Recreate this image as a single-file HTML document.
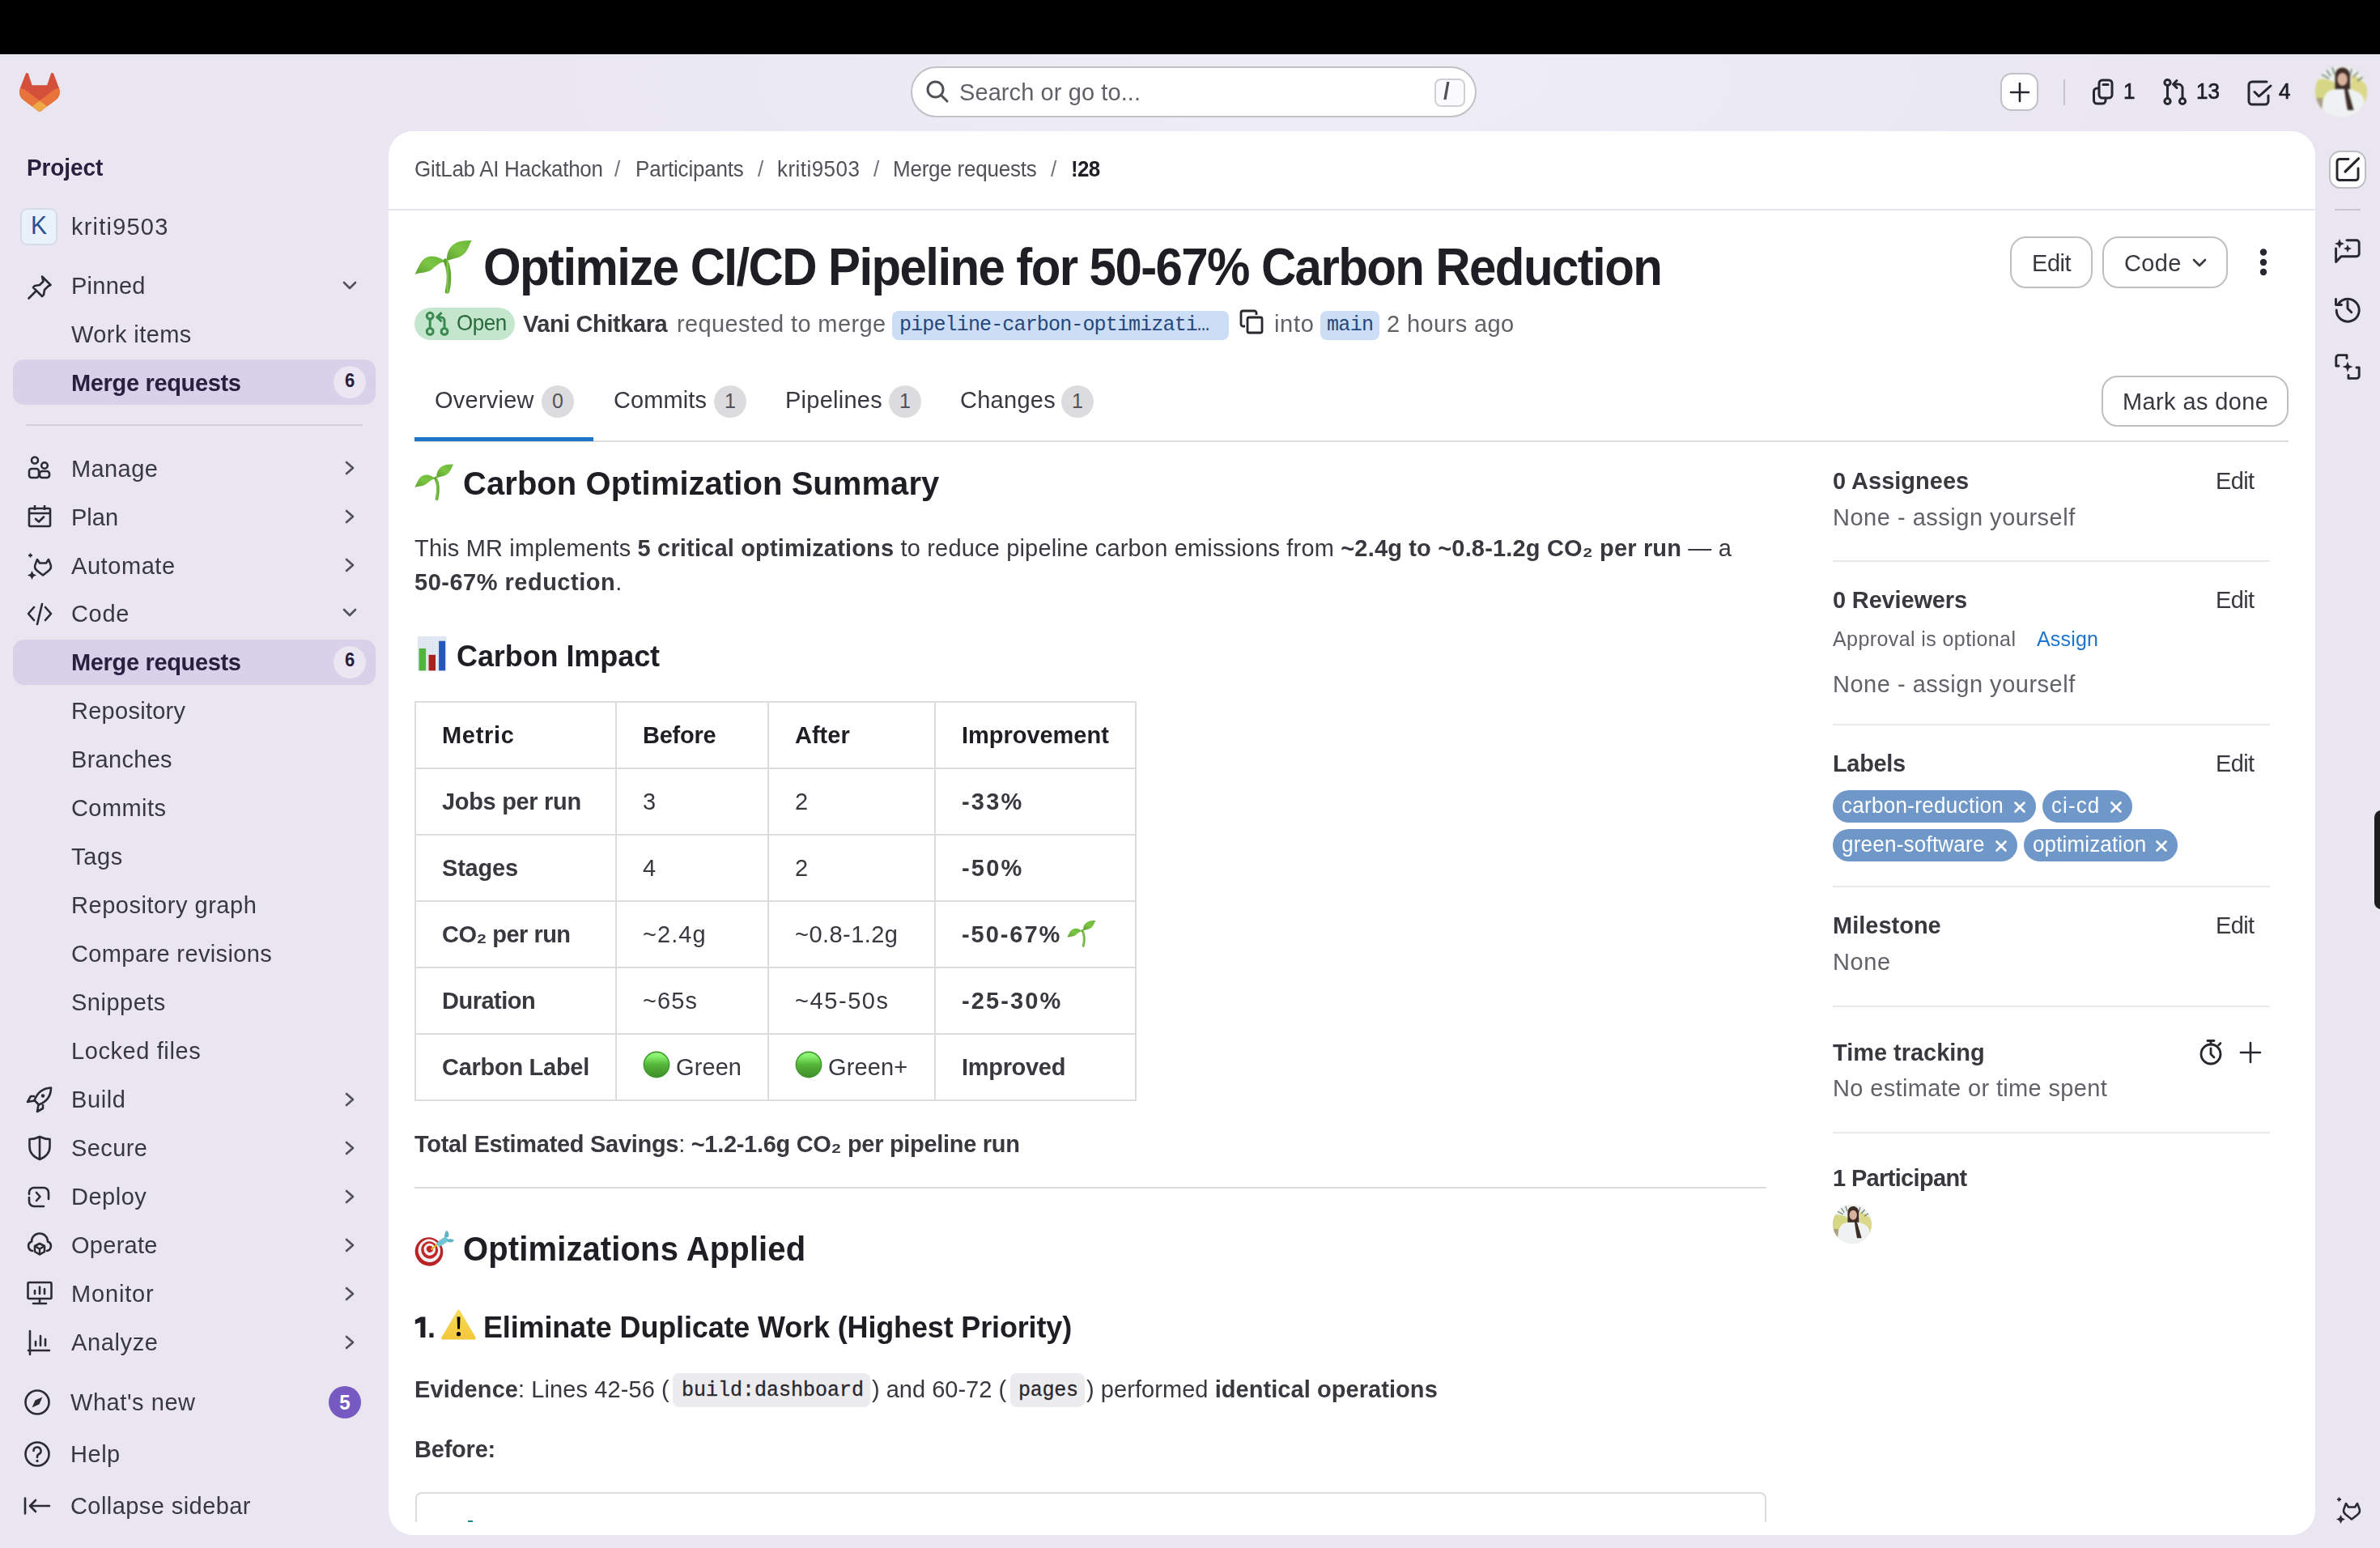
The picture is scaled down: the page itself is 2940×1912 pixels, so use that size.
<!DOCTYPE html><html><head><meta charset="utf-8"><title>Optimize CI/CD Pipeline</title><style>*{margin:0;padding:0}
html,body{width:2940px;height:1912px;overflow:hidden}
body{background:radial-gradient(ellipse 1150px 330px at 1650px 100px, #efedf6 0%, rgba(239,237,246,0.55) 45%, rgba(239,237,246,0) 100%), #e9e6f1;position:relative;font-family:'Liberation Sans',sans-serif}
.t{position:absolute;white-space:nowrap}
.t b{font-weight:700}
.r{position:absolute;display:block;overflow:visible}
</style></head><body>
<div class="r" style="left:0px;top:0px;width:2940px;height:67px;background:#000"></div>
<svg class="r" style="left:24px;top:90px;" width="50" height="48" viewBox="0 0 25 24"><path d="m24.507 9.5-.034-.09L21.082.562a.896.896 0 0 0-1.694.091l-2.29 7.01H7.825L5.535.653a.898.898 0 0 0-1.694-.09L.451 9.411.416 9.5a6.297 6.297 0 0 0 2.09 7.278l.012.01.03.022 5.16 3.867 2.560 1.935 1.554 1.176a1.051 1.051 0 0 0 1.268 0l1.555-1.176 2.56-1.935 5.197-3.89.014-.01A6.297 6.297 0 0 0 24.507 9.5Z" fill="#d4503a"/>
<path d="m24.507 9.5-.034-.09a11.44 11.44 0 0 0-4.56 2.051l-7.447 5.632 4.742 3.584 5.197-3.89.014-.01A6.297 6.297 0 0 0 24.507 9.5Z" fill="#e8743b"/>
<path d="m7.707 20.677 2.56 1.935 1.555 1.176a1.051 1.051 0 0 0 1.268 0l1.555-1.176 2.56-1.935-4.743-3.584-4.755 3.584Z" fill="#eea846"/>
<path d="M5.01 11.461a11.43 11.43 0 0 0-4.56-2.05L.416 9.5a6.297 6.297 0 0 0 2.09 7.278l.012.01.03.022 5.16 3.867 4.745-3.584-7.444-5.632Z" fill="#e8743b"/></svg>
<div class="r" style="left:1125px;top:82px;width:699px;height:63px;background:#fff;border:2px solid #c2c1c7;border-radius:32px;box-sizing:border-box"></div>
<svg class="r" style="left:1143px;top:98px;" width="30" height="30" viewBox="0 0 30 30"><circle cx="12.5" cy="12.5" r="9.5" fill="none" stroke="#535158" stroke-width="3"/><path d="M19.5 19.5 27 27" stroke="#535158" stroke-width="3" stroke-linecap="round"/></svg>
<div class="t" style="left:1185px;top:96.5px;font-size:29px;line-height:35px;font-weight:400;color:#626168;letter-spacing:0.09px;font-family:'Liberation Sans', sans-serif;transform:scaleY(1.04);transform-origin:0 27.5px;">Search or go to...</div>
<div class="r" style="left:1772px;top:97px;width:38px;height:35px;background:#fbfbfd;border:2px solid #cfcfd4;border-radius:8px;box-sizing:border-box"></div>
<div class="t" style="left:1783px;top:97.3px;font-size:28px;line-height:34px;font-weight:700;color:#535158;letter-spacing:0.00px;font-family:'Liberation Sans', sans-serif;transform:scaleY(1.045);transform-origin:0 26.7px;">/</div>
<div class="r" style="left:2471px;top:90px;width:47px;height:47px;background:#fff;border:2px solid #c2c1c7;border-radius:14px;box-sizing:border-box"></div>
<svg class="r" style="left:2483px;top:102px;" width="24" height="24" viewBox="0 0 24 24"><path d="M12 1v22M1 12h22" stroke="#28272d" stroke-width="2.6" stroke-linecap="round"/></svg>
<div class="r" style="left:2549px;top:98px;width:2px;height:32px;background:#c4c3c9"></div>
<svg class="r" style="left:2584px;top:97px;" width="28" height="34" viewBox="0 0 28 34"><rect x="9" y="2" width="16" height="22" rx="4" fill="none" stroke="#28272d" stroke-width="3"/><path d="M14 7.5h6" stroke="#28272d" stroke-width="3" stroke-linecap="round"/><path d="M9 12H6.5A4 4 0 0 0 2.5 16v11a4 4 0 0 0 4 4H13a4 4 0 0 0 4-4v-3" fill="none" stroke="#28272d" stroke-width="3"/></svg>
<div class="t" style="left:2623px;top:97.5px;font-size:26px;line-height:31px;font-weight:400;color:#1f1e24;letter-spacing:0.00px;font-family:'Liberation Sans', sans-serif;transform:scaleY(1.04);transform-origin:0 24.5px;-webkit-text-stroke:0.7px #1f1e24">1</div>
<svg class="r" style="left:2672px;top:97px;" width="32" height="34" viewBox="0 0 32 34"><circle cx="5.5" cy="5" r="3.6" fill="none" stroke="#28272d" stroke-width="3"/><circle cx="5.5" cy="28" r="3.6" fill="none" stroke="#28272d" stroke-width="3"/><circle cx="24" cy="28" r="3.6" fill="none" stroke="#28272d" stroke-width="3"/><path d="M5.5 8.6v15.8" stroke="#28272d" stroke-width="3"/><path d="M24 24.4V12a5 5 0 0 0-5-5h-5" fill="none" stroke="#28272d" stroke-width="3"/><path d="M17 2.5 12.5 7l4.5 4.5" fill="none" stroke="#28272d" stroke-width="3" stroke-linejoin="round" stroke-linecap="round"/></svg>
<div class="t" style="left:2713px;top:97.5px;font-size:26px;line-height:31px;font-weight:400;color:#1f1e24;letter-spacing:0.00px;font-family:'Liberation Sans', sans-serif;transform:scaleY(1.04);transform-origin:0 24.5px;-webkit-text-stroke:0.7px #1f1e24">13</div>
<svg class="r" style="left:2774px;top:98px;" width="34" height="34" viewBox="0 0 34 34"><path d="M26 3H8a4 4 0 0 0-4 4v20a4 4 0 0 0 4 4h16a4 4 0 0 0 4-4v-7" fill="none" stroke="#28272d" stroke-width="3" stroke-linecap="round"/><path d="M11 15.5l5.5 5.5L31 8" fill="none" stroke="#28272d" stroke-width="3" stroke-linecap="round" stroke-linejoin="round"/></svg>
<div class="t" style="left:2815px;top:97.5px;font-size:26px;line-height:31px;font-weight:400;color:#1f1e24;letter-spacing:0.00px;font-family:'Liberation Sans', sans-serif;transform:scaleY(1.04);transform-origin:0 24.5px;-webkit-text-stroke:0.7px #1f1e24">4</div>
<svg class="r" style="left:2860px;top:81px;filter:blur(0.9px)" width="64" height="64" viewBox="0 0 64 64"><defs><clipPath id="cpa1"><circle cx="32" cy="32" r="32"/></clipPath></defs>
<g clip-path="url(#cpa1)"><rect width="64" height="64" fill="#dcdcb0"/>
<path d="M0 0h64v22H0z" fill="#edf0ec"/>
<path d="M0 18c8-3 17-1 24 3v22H0z" fill="#d6d685"/>
<path d="M44 12c10 1 18 9 20 17v24H47z" fill="#dcd88a"/>
<path d="M8 11l9 5M13 4l6 9M21 2l3 9M45 4l-2 8M53 8l-6 6M59 14l-7 5" stroke="#6f7f78" stroke-width="1.6"/>
<rect x="0" y="40" width="9" height="15" fill="#a99f84"/>
<path d="M24.5 14c0-8 4-11.5 9-11.5s9.5 3.5 9.5 11.5v20h-18.5z" fill="#3e2d27"/>
<ellipse cx="33.6" cy="17" rx="6.2" ry="8" fill="#d9b29e"/>
<path d="M8 64c0-13 1-27 8-32 5-3 10-3 13-3h9c9 0 18 3 22 12 1 6 1 14-1 23z" fill="#eff2f2"/>
<path d="M38.5 24c3 10 6 20 9 31h-7.5c-2-10-3.5-20-4.5-31z" fill="#3e2d27"/></g></svg>
<div class="t" style="left:33px;top:191.3px;font-size:28px;line-height:34px;font-weight:700;color:#28203f;letter-spacing:-0.12px;font-family:'Liberation Sans', sans-serif;transform:scaleY(1.045);transform-origin:0 26.7px;">Project</div>
<div class="r" style="left:25px;top:257px;width:46px;height:46px;background:#e9f1fb;border:2px solid #d4dcea;border-radius:9px;box-sizing:border-box"></div>
<div class="t" style="left:48px;top:260.6px;font-size:30px;line-height:36px;font-weight:400;color:#2b4f8e;letter-spacing:0.00px;font-family:'Liberation Sans', sans-serif;transform:translateX(-50%) scaleY(1.04);transform-origin:0 28.4px;">K</div>
<div class="t" style="left:88px;top:262.5px;font-size:29px;line-height:35px;font-weight:400;color:#3a383f;letter-spacing:1.21px;font-family:'Liberation Sans', sans-serif;transform:scaleY(1.04);transform-origin:0 27.5px;">kriti9503</div>
<svg class="r" style="left:33px;top:339px;" width="32" height="34" viewBox="0 0 32 34"><path d="M19 2.5l10.5 10.5-3 1.5-4.5 4.5-1 6-2 2-11-11 2-2 6-1 4.5-4.5z" fill="none" stroke="#2c2b31" stroke-width="2.6" stroke-linejoin="round"/><path d="M11 21L2.5 29.5" stroke="#2c2b31" stroke-width="2.6" stroke-linecap="round"/></svg>
<div class="t" style="left:88px;top:335.5px;font-size:29px;line-height:35px;font-weight:400;color:#3a383f;letter-spacing:0.24px;font-family:'Liberation Sans', sans-serif;transform:scaleY(1.04);transform-origin:0 27.5px;">Pinned</div>
<svg class="r" style="left:423px;top:346px;" width="18" height="14" viewBox="0 0 18 14"><path d="M2 3l7 7 7-7" fill="none" stroke="#535158" stroke-width="2.6" stroke-linecap="round" stroke-linejoin="round"/></svg>
<div class="t" style="left:88px;top:395.5px;font-size:29px;line-height:35px;font-weight:400;color:#3a383f;letter-spacing:0.43px;font-family:'Liberation Sans', sans-serif;transform:scaleY(1.04);transform-origin:0 27.5px;">Work items</div>
<div class="r" style="left:16px;top:444px;width:448px;height:56px;background:#d9d0e9;border-radius:14px"></div>
<div class="t" style="left:88px;top:455.5px;font-size:29px;line-height:35px;font-weight:700;color:#28203f;letter-spacing:-0.34px;font-family:'Liberation Sans', sans-serif;transform:scaleY(1.045);transform-origin:0 27.5px;">Merge requests</div>
<div class="r" style="left:412px;top:452.0px;width:40px;height:40.0px;background:#ebe7f2;border-radius:20px"></div>
<div class="t" style="left:432px;top:458.4px;font-size:22px;line-height:26px;font-weight:700;color:#28203f;letter-spacing:0.00px;font-family:'Liberation Sans', sans-serif;transform:translateX(-50%) scaleY(1.045);transform-origin:0 20.6px;">6</div>
<div class="r" style="left:32px;top:524px;width:416px;height:2px;background:#d3d0dc"></div>
<svg class="r" style="left:33px;top:562px;" width="32" height="34" viewBox="0 0 32 34"><circle cx="10" cy="6.5" r="4" fill="none" stroke="#2c2b31" stroke-width="2.6"/><rect x="3" y="17" width="12" height="11" rx="3" fill="none" stroke="#2c2b31" stroke-width="2.6"/><circle cx="22" cy="13" r="3.8" fill="none" stroke="#2c2b31" stroke-width="2.6"/><rect x="16" y="20" width="12" height="8" rx="3" fill="none" stroke="#2c2b31" stroke-width="2.6"/></svg>
<div class="t" style="left:88px;top:561.5px;font-size:29px;line-height:35px;font-weight:400;color:#3a383f;letter-spacing:0.40px;font-family:'Liberation Sans', sans-serif;transform:scaleY(1.04);transform-origin:0 27.5px;">Manage</div>
<svg class="r" style="left:424px;top:569px;" width="16" height="18" viewBox="0 0 16 18"><path d="M4 2l8 7-8 7" fill="none" stroke="#535158" stroke-width="2.6" stroke-linecap="round" stroke-linejoin="round"/></svg>
<svg class="r" style="left:33px;top:622px;" width="32" height="34" viewBox="0 0 32 34"><rect x="3" y="6" width="26" height="22" rx="1.5" fill="none" stroke="#2c2b31" stroke-width="2.6"/><path d="M3 12h26M10 2v6M22 2v6" stroke="#2c2b31" stroke-width="2.6"/><path d="M11 19l4 3.5 6-6" fill="none" stroke="#2c2b31" stroke-width="2.6" stroke-linecap="round" stroke-linejoin="round"/></svg>
<div class="t" style="left:88px;top:621.5px;font-size:29px;line-height:35px;font-weight:400;color:#3a383f;letter-spacing:0.00px;font-family:'Liberation Sans', sans-serif;transform:scaleY(1.04);transform-origin:0 27.5px;">Plan</div>
<svg class="r" style="left:424px;top:629px;" width="16" height="18" viewBox="0 0 16 18"><path d="M4 2l8 7-8 7" fill="none" stroke="#535158" stroke-width="2.6" stroke-linecap="round" stroke-linejoin="round"/></svg>
<svg class="r" style="left:33px;top:682px;" width="32" height="34" viewBox="0 0 32 34"><path d="M13 9l-2.5 6.5C9 19 10.5 21 13 23l7 5.5 7-5.5c2.5-2 4-4 2.5-7.5L27 9l-3 4.5h-8z" fill="none" stroke="#2c2b31" stroke-width="2.6" stroke-linejoin="round"/><path d="M4.5 1.5v5M2 4h5" stroke="#2c2b31" stroke-width="2"/><path d="M6.5 23l1.8 3.7 3.7 1.8-3.7 1.8L6.5 34 4.7 30.3 1 28.5l3.7-1.8z" fill="#2c2b31"/></svg>
<div class="t" style="left:88px;top:681.5px;font-size:29px;line-height:35px;font-weight:400;color:#3a383f;letter-spacing:0.57px;font-family:'Liberation Sans', sans-serif;transform:scaleY(1.04);transform-origin:0 27.5px;">Automate</div>
<svg class="r" style="left:424px;top:689px;" width="16" height="18" viewBox="0 0 16 18"><path d="M4 2l8 7-8 7" fill="none" stroke="#535158" stroke-width="2.6" stroke-linecap="round" stroke-linejoin="round"/></svg>
<svg class="r" style="left:33px;top:741.5px;" width="32" height="34" viewBox="0 0 32 34"><path d="M9 8L2 16l7 8M23 8l7 8-7 8M19 4l-6 25" fill="none" stroke="#2c2b31" stroke-width="2.6" stroke-linecap="round" stroke-linejoin="round"/></svg>
<div class="t" style="left:88px;top:741.0px;font-size:29px;line-height:35px;font-weight:400;color:#3a383f;letter-spacing:0.67px;font-family:'Liberation Sans', sans-serif;transform:scaleY(1.04);transform-origin:0 27.5px;">Code</div>
<svg class="r" style="left:423px;top:749.5px;" width="18" height="14" viewBox="0 0 18 14"><path d="M2 3l7 7 7-7" fill="none" stroke="#535158" stroke-width="2.6" stroke-linecap="round" stroke-linejoin="round"/></svg>
<div class="r" style="left:16px;top:790px;width:448px;height:56px;background:#d9d0e9;border-radius:14px"></div>
<div class="t" style="left:88px;top:800.5px;font-size:29px;line-height:35px;font-weight:700;color:#28203f;letter-spacing:-0.34px;font-family:'Liberation Sans', sans-serif;transform:scaleY(1.045);transform-origin:0 27.5px;">Merge requests</div>
<div class="r" style="left:412px;top:798.0px;width:40px;height:40.0px;background:#ebe7f2;border-radius:20px"></div>
<div class="t" style="left:432px;top:803.4px;font-size:22px;line-height:26px;font-weight:700;color:#28203f;letter-spacing:0.00px;font-family:'Liberation Sans', sans-serif;transform:translateX(-50%) scaleY(1.045);transform-origin:0 20.6px;">6</div>
<div class="t" style="left:88px;top:861.0px;font-size:29px;line-height:35px;font-weight:400;color:#3a383f;letter-spacing:0.27px;font-family:'Liberation Sans', sans-serif;transform:scaleY(1.04);transform-origin:0 27.5px;">Repository</div>
<div class="t" style="left:88px;top:921.0px;font-size:29px;line-height:35px;font-weight:400;color:#3a383f;letter-spacing:0.29px;font-family:'Liberation Sans', sans-serif;transform:scaleY(1.04);transform-origin:0 27.5px;">Branches</div>
<div class="t" style="left:88px;top:981.0px;font-size:29px;line-height:35px;font-weight:400;color:#3a383f;letter-spacing:0.43px;font-family:'Liberation Sans', sans-serif;transform:scaleY(1.04);transform-origin:0 27.5px;">Commits</div>
<div class="t" style="left:88px;top:1041.0px;font-size:29px;line-height:35px;font-weight:400;color:#3a383f;letter-spacing:0.67px;font-family:'Liberation Sans', sans-serif;transform:scaleY(1.04);transform-origin:0 27.5px;">Tags</div>
<div class="t" style="left:88px;top:1101.0px;font-size:29px;line-height:35px;font-weight:400;color:#3a383f;letter-spacing:0.53px;font-family:'Liberation Sans', sans-serif;transform:scaleY(1.04);transform-origin:0 27.5px;">Repository graph</div>
<div class="t" style="left:88px;top:1161.0px;font-size:29px;line-height:35px;font-weight:400;color:#3a383f;letter-spacing:0.38px;font-family:'Liberation Sans', sans-serif;transform:scaleY(1.04);transform-origin:0 27.5px;">Compare revisions</div>
<div class="t" style="left:88px;top:1221.0px;font-size:29px;line-height:35px;font-weight:400;color:#3a383f;letter-spacing:0.50px;font-family:'Liberation Sans', sans-serif;transform:scaleY(1.04);transform-origin:0 27.5px;">Snippets</div>
<div class="t" style="left:88px;top:1281.0px;font-size:29px;line-height:35px;font-weight:400;color:#3a383f;letter-spacing:0.59px;font-family:'Liberation Sans', sans-serif;transform:scaleY(1.04);transform-origin:0 27.5px;">Locked files</div>
<svg class="r" style="left:33px;top:1341.5px;" width="32" height="34" viewBox="0 0 32 34"><path d="M30 1.5C20 2 13 8 9.5 17l5.5 5.5C24 19 30 12 30 1.5z" fill="none" stroke="#2c2b31" stroke-width="2.6" stroke-linejoin="round"/><circle cx="20" cy="11.5" r="2.2" fill="#2c2b31"/><path d="M10 12H5L1 19l8.5-1.5M20 22v5l-7 4 1.5-8.5" fill="none" stroke="#2c2b31" stroke-width="2.6" stroke-linejoin="round"/></svg>
<div class="t" style="left:88px;top:1341.0px;font-size:29px;line-height:35px;font-weight:400;color:#3a383f;letter-spacing:0.62px;font-family:'Liberation Sans', sans-serif;transform:scaleY(1.04);transform-origin:0 27.5px;">Build</div>
<svg class="r" style="left:424px;top:1348.5px;" width="16" height="18" viewBox="0 0 16 18"><path d="M4 2l8 7-8 7" fill="none" stroke="#535158" stroke-width="2.6" stroke-linecap="round" stroke-linejoin="round"/></svg>
<svg class="r" style="left:33px;top:1401.5px;" width="32" height="34" viewBox="0 0 32 34"><path d="M16 2C12 4 8 5 3.5 5v9c0 7.5 5 13 12.5 16 7.5-3 12.5-8.5 12.5-16V5C24 5 20 4 16 2z" fill="none" stroke="#2c2b31" stroke-width="2.6" stroke-linejoin="round"/><path d="M16 3v26" stroke="#2c2b31" stroke-width="2.6"/></svg>
<div class="t" style="left:88px;top:1401.0px;font-size:29px;line-height:35px;font-weight:400;color:#3a383f;letter-spacing:0.40px;font-family:'Liberation Sans', sans-serif;transform:scaleY(1.04);transform-origin:0 27.5px;">Secure</div>
<svg class="r" style="left:424px;top:1408.5px;" width="16" height="18" viewBox="0 0 16 18"><path d="M4 2l8 7-8 7" fill="none" stroke="#535158" stroke-width="2.6" stroke-linecap="round" stroke-linejoin="round"/></svg>
<svg class="r" style="left:33px;top:1461.5px;" width="32" height="34" viewBox="0 0 32 34"><path d="M3 13v-2a6 6 0 0 1 6-6h12a6 6 0 0 1 6 6v8" fill="none" stroke="#2c2b31" stroke-width="2.6" stroke-linecap="round"/><path d="M3 17v5a6 6 0 0 0 6 6h12" fill="none" stroke="#2c2b31" stroke-width="2.6" stroke-linecap="round"/><path d="M12 11l4.5 5-4.5 5" fill="none" stroke="#2c2b31" stroke-width="2.6" stroke-linecap="round" stroke-linejoin="round"/></svg>
<div class="t" style="left:88px;top:1461.0px;font-size:29px;line-height:35px;font-weight:400;color:#3a383f;letter-spacing:0.52px;font-family:'Liberation Sans', sans-serif;transform:scaleY(1.04);transform-origin:0 27.5px;">Deploy</div>
<svg class="r" style="left:424px;top:1468.5px;" width="16" height="18" viewBox="0 0 16 18"><path d="M4 2l8 7-8 7" fill="none" stroke="#535158" stroke-width="2.6" stroke-linecap="round" stroke-linejoin="round"/></svg>
<svg class="r" style="left:33px;top:1521.5px;" width="32" height="34" viewBox="0 0 32 34"><path d="M7 23a6 6 0 0 1-1-11.5A10 10 0 0 1 26 11.5 6 6 0 0 1 25 23" fill="none" stroke="#2c2b31" stroke-width="2.6" stroke-linecap="round"/><path d="M16 14l-6 3v7l6 3.5 6-3.5v-7z" fill="none" stroke="#2c2b31" stroke-width="2.6" stroke-linejoin="round"/><path d="M10 17l6 3.5 6-3.5M16 20.5v7" fill="none" stroke="#2c2b31" stroke-width="2.4"/></svg>
<div class="t" style="left:88px;top:1521.0px;font-size:29px;line-height:35px;font-weight:400;color:#3a383f;letter-spacing:0.28px;font-family:'Liberation Sans', sans-serif;transform:scaleY(1.04);transform-origin:0 27.5px;">Operate</div>
<svg class="r" style="left:424px;top:1528.5px;" width="16" height="18" viewBox="0 0 16 18"><path d="M4 2l8 7-8 7" fill="none" stroke="#535158" stroke-width="2.6" stroke-linecap="round" stroke-linejoin="round"/></svg>
<svg class="r" style="left:33px;top:1581.5px;" width="32" height="34" viewBox="0 0 32 34"><rect x="1.5" y="2" width="29" height="20" rx="1.5" fill="none" stroke="#2c2b31" stroke-width="2.6"/><path d="M10 16v-4M16 16V7.5M22 16v-6M16 22v6M8 28h16" stroke="#2c2b31" stroke-width="2.6" stroke-linecap="round"/></svg>
<div class="t" style="left:88px;top:1581.0px;font-size:29px;line-height:35px;font-weight:400;color:#3a383f;letter-spacing:0.83px;font-family:'Liberation Sans', sans-serif;transform:scaleY(1.04);transform-origin:0 27.5px;">Monitor</div>
<svg class="r" style="left:424px;top:1588.5px;" width="16" height="18" viewBox="0 0 16 18"><path d="M4 2l8 7-8 7" fill="none" stroke="#535158" stroke-width="2.6" stroke-linecap="round" stroke-linejoin="round"/></svg>
<svg class="r" style="left:33px;top:1641.5px;" width="32" height="34" viewBox="0 0 32 34"><path d="M4 2v29M2 26h26" stroke="#2c2b31" stroke-width="2.6" stroke-linecap="round"/><path d="M11 20v-5M17 20V8M23 20v-8" stroke="#2c2b31" stroke-width="2.6" stroke-linecap="round"/></svg>
<div class="t" style="left:88px;top:1641.0px;font-size:29px;line-height:35px;font-weight:400;color:#3a383f;letter-spacing:0.62px;font-family:'Liberation Sans', sans-serif;transform:scaleY(1.04);transform-origin:0 27.5px;">Analyze</div>
<svg class="r" style="left:424px;top:1648.5px;" width="16" height="18" viewBox="0 0 16 18"><path d="M4 2l8 7-8 7" fill="none" stroke="#535158" stroke-width="2.6" stroke-linecap="round" stroke-linejoin="round"/></svg>
<svg class="r" style="left:29px;top:1715px;" width="34" height="34" viewBox="0 0 34 34"><circle cx="17" cy="17" r="14.5" fill="none" stroke="#2c2b31" stroke-width="2.6"/><path d="M23.5 10.5l-4 9-9 4 4-9z" fill="#2c2b31"/></svg>
<div class="t" style="left:87px;top:1715.0px;font-size:29px;line-height:35px;font-weight:400;color:#3a383f;letter-spacing:0.56px;font-family:'Liberation Sans', sans-serif;transform:scaleY(1.04);transform-origin:0 27.5px;">What's new</div>
<div class="r" style="left:406px;top:1712px;width:40px;height:40px;background:#7759c2;border-radius:20px"></div>
<div class="t" style="left:426px;top:1718.2px;font-size:24px;line-height:29px;font-weight:700;color:#fff;letter-spacing:0.00px;font-family:'Liberation Sans', sans-serif;transform:translateX(-50%) scaleY(1.045);transform-origin:0 22.8px;">5</div>
<svg class="r" style="left:29px;top:1779px;" width="34" height="34" viewBox="0 0 34 34"><circle cx="17" cy="17" r="14.5" fill="none" stroke="#2c2b31" stroke-width="2.6"/><path d="M12.5 13a4.5 4.5 0 1 1 6.5 4c-1.5.8-2 1.7-2 3v1" fill="none" stroke="#2c2b31" stroke-width="2.6" stroke-linecap="round"/><circle cx="17" cy="25.5" r="1.7" fill="#2c2b31"/></svg>
<div class="t" style="left:87px;top:1779.0px;font-size:29px;line-height:35px;font-weight:400;color:#3a383f;letter-spacing:0.53px;font-family:'Liberation Sans', sans-serif;transform:scaleY(1.04);transform-origin:0 27.5px;">Help</div>
<svg class="r" style="left:29px;top:1849px;" width="34" height="22" viewBox="0 0 34 22"><path d="M2 1.5v19M32 11H8M15 4l-7 7 7 7" fill="none" stroke="#2c2b31" stroke-width="2.6" stroke-linecap="round" stroke-linejoin="round"/></svg>
<div class="t" style="left:87px;top:1843.1px;font-size:29px;line-height:35px;font-weight:400;color:#3a383f;letter-spacing:0.43px;font-family:'Liberation Sans', sans-serif;transform:scaleY(1.04);transform-origin:0 27.5px;">Collapse sidebar</div>
<div class="r" style="left:480px;top:162px;width:2380px;height:1734px;background:#fff;border-radius:30px"></div>
<div class="t" style="left:512px;top:194.1px;font-size:26px;line-height:31px;font-weight:400;color:#535158;letter-spacing:-0.31px;font-family:'Liberation Sans', sans-serif;transform:scaleY(1.04);transform-origin:0 24.5px;">GitLab AI Hackathon</div>
<div class="t" style="left:759px;top:194.1px;font-size:26px;line-height:31px;font-weight:400;color:#737278;letter-spacing:0.00px;font-family:'Liberation Sans', sans-serif;transform:scaleY(1.04);transform-origin:0 24.5px;">/</div>
<div class="t" style="left:785px;top:194.1px;font-size:26px;line-height:31px;font-weight:400;color:#535158;letter-spacing:-0.18px;font-family:'Liberation Sans', sans-serif;transform:scaleY(1.04);transform-origin:0 24.5px;">Participants</div>
<div class="t" style="left:936px;top:194.1px;font-size:26px;line-height:31px;font-weight:400;color:#737278;letter-spacing:0.00px;font-family:'Liberation Sans', sans-serif;transform:scaleY(1.04);transform-origin:0 24.5px;">/</div>
<div class="t" style="left:960px;top:194.1px;font-size:26px;line-height:31px;font-weight:400;color:#535158;letter-spacing:0.45px;font-family:'Liberation Sans', sans-serif;transform:scaleY(1.04);transform-origin:0 24.5px;">kriti9503</div>
<div class="t" style="left:1079px;top:194.1px;font-size:26px;line-height:31px;font-weight:400;color:#737278;letter-spacing:0.00px;font-family:'Liberation Sans', sans-serif;transform:scaleY(1.04);transform-origin:0 24.5px;">/</div>
<div class="t" style="left:1103px;top:194.1px;font-size:26px;line-height:31px;font-weight:400;color:#535158;letter-spacing:-0.23px;font-family:'Liberation Sans', sans-serif;transform:scaleY(1.04);transform-origin:0 24.5px;">Merge requests</div>
<div class="t" style="left:1298px;top:194.1px;font-size:26px;line-height:31px;font-weight:400;color:#737278;letter-spacing:0.00px;font-family:'Liberation Sans', sans-serif;transform:scaleY(1.04);transform-origin:0 24.5px;">/</div>
<div class="t" style="left:1323px;top:194.1px;font-size:26px;line-height:31px;font-weight:700;color:#1f1e24;letter-spacing:-0.70px;font-family:'Liberation Sans', sans-serif;transform:scaleY(1.045);transform-origin:0 24.5px;">!28</div>
<div class="r" style="left:480px;top:258px;width:2380px;height:2px;background:#e6e4ec"></div>
<svg class="r" style="left:512px;top:295px;" width="72" height="66" viewBox="0 0 72 64"><defs><linearGradient id="lg1" x1="0" y1="1" x2="1" y2="0"><stop offset="0" stop-color="#5d9f30"/><stop offset=".5" stop-color="#7cc544"/><stop offset="1" stop-color="#6ab53a"/></linearGradient>
<linearGradient id="lg2" x1="0" y1="0" x2="1" y2="0"><stop offset="0" stop-color="#5c9d2f"/><stop offset=".6" stop-color="#86cf4a"/><stop offset="1" stop-color="#64a835"/></linearGradient></defs>
<path d="M38.8 27.6C30 20 16 16 8 28 4 35 2 40 .5 43c6-3 15-1 22-7 6-5 10-8.5 16.3-8.4z" fill="url(#lg1)"/>
<path d="M40.2 26.2C39 14 46 3 60 1.5c5-.5 9-.5 11.2-.5-3 2-3 9-9.2 16-7 7-16 6-21.8 9.2z" fill="url(#lg1)"/>
<path d="M38.5 26c4.5 10 5.5 22 2 38" fill="none" stroke="url(#lg2)" stroke-width="5.5" stroke-linecap="round"/></svg>
<div class="t" style="left:597px;top:295.7px;font-size:60px;line-height:72px;font-weight:700;color:#1f1e24;letter-spacing:-1.60px;font-family:'Liberation Sans', sans-serif;transform:scaleY(1.09);transform-origin:0 56.8px;">Optimize CI/CD Pipeline for 50-67% Carbon Reduction</div>
<div class="r" style="left:2483px;top:292px;width:102px;height:64px;background:#fff;border:2px solid #bfbfc3;border-radius:20px;box-sizing:border-box"></div>
<div class="t" style="left:2510px;top:307.5px;font-size:29px;line-height:35px;font-weight:400;color:#3a383f;letter-spacing:-0.43px;font-family:'Liberation Sans', sans-serif;transform:scaleY(1.04);transform-origin:0 27.5px;">Edit</div>
<div class="r" style="left:2597px;top:292px;width:155px;height:64px;background:#fff;border:2px solid #bfbfc3;border-radius:20px;box-sizing:border-box"></div>
<div class="t" style="left:2624px;top:307.5px;font-size:29px;line-height:35px;font-weight:400;color:#3a383f;letter-spacing:0.33px;font-family:'Liberation Sans', sans-serif;transform:scaleY(1.04);transform-origin:0 27.5px;">Code</div>
<svg class="r" style="left:2708px;top:319px;" width="18" height="12" viewBox="0 0 18 12"><path d="M2 2l7 7 7-7" fill="none" stroke="#3a383f" stroke-width="2.6" stroke-linecap="round" stroke-linejoin="round"/></svg>
<svg class="r" style="left:2788px;top:303px;" width="16" height="40" viewBox="0 0 16 40"><circle cx="8" cy="8.5" r="4.2" fill="#28272d"/><circle cx="8" cy="21" r="4.2" fill="#28272d"/><circle cx="8" cy="33" r="4.2" fill="#28272d"/></svg>
<div class="r" style="left:512px;top:380px;width:124px;height:40px;background:#c3e6cd;border-radius:20px"></div>
<svg class="r" style="left:526px;top:385px;" width="30" height="30" viewBox="0 0 30 30"><circle cx="5.2" cy="5.2" r="3.9" fill="none" stroke="#3a8a4e" stroke-width="3"/><circle cx="5.2" cy="24.4" r="3.9" fill="none" stroke="#3a8a4e" stroke-width="3"/><circle cx="23" cy="24.4" r="3.9" fill="none" stroke="#3a8a4e" stroke-width="3"/><path d="M5.2 9v11.5M23 20.5V11a4 4 0 0 0-4-4h-4.5" fill="none" stroke="#3a8a4e" stroke-width="3"/><path d="M18.5 2.2 14 6.8l4.5 4.4" fill="none" stroke="#3a8a4e" stroke-width="3" stroke-linecap="square" stroke-linejoin="miter"/></svg>
<div class="t" style="left:564px;top:383.5px;font-size:26px;line-height:31px;font-weight:400;color:#2b6a3c;letter-spacing:-0.50px;font-family:'Liberation Sans', sans-serif;transform:scaleY(1.04);transform-origin:0 24.5px;">Open</div>
<div class="t" style="left:646px;top:382.5px;font-size:29px;line-height:35px;font-weight:700;color:#3a383f;letter-spacing:-0.42px;font-family:'Liberation Sans', sans-serif;transform:scaleY(1.045);transform-origin:0 27.5px;">Vani Chitkara</div>
<div class="t" style="left:836px;top:382.5px;font-size:29px;line-height:35px;font-weight:400;color:#626168;letter-spacing:0.39px;font-family:'Liberation Sans', sans-serif;transform:scaleY(1.04);transform-origin:0 27.5px;">requested to merge</div>
<div class="r" style="left:1102px;top:384px;width:416px;height:36px;background:#cbdef6;border-radius:8px"></div>
<div class="t" style="left:1111px;top:387.3px;font-size:25px;line-height:30px;font-weight:400;color:#26477a;letter-spacing:-0.85px;font-family:'Liberation Mono', monospace;">pipeline-carbon-optimizati…</div>
<svg class="r" style="left:1531px;top:382px;" width="30" height="32" viewBox="0 0 30 32"><path d="M7 21H4.5A2.5 2.5 0 0 1 2 18.5v-14A2.5 2.5 0 0 1 4.5 2h14A2.5 2.5 0 0 1 21 4.5V7" fill="none" stroke="#28272d" stroke-width="2.8"/><rect x="10" y="10" width="18" height="19" rx="2" fill="none" stroke="#28272d" stroke-width="2.8"/></svg>
<div class="t" style="left:1574px;top:382.5px;font-size:29px;line-height:35px;font-weight:400;color:#626168;letter-spacing:0.67px;font-family:'Liberation Sans', sans-serif;transform:scaleY(1.04);transform-origin:0 27.5px;">into</div>
<div class="r" style="left:1631px;top:384px;width:73px;height:36px;background:#cbdef6;border-radius:8px"></div>
<div class="t" style="left:1639px;top:387.3px;font-size:25px;line-height:30px;font-weight:400;color:#26477a;letter-spacing:-0.67px;font-family:'Liberation Mono', monospace;">main</div>
<div class="t" style="left:1713px;top:382.5px;font-size:29px;line-height:35px;font-weight:400;color:#626168;letter-spacing:0.40px;font-family:'Liberation Sans', sans-serif;transform:scaleY(1.04);transform-origin:0 27.5px;">2 hours ago</div>
<div class="t" style="left:537px;top:476.5px;font-size:29px;line-height:35px;font-weight:400;color:#3a383f;letter-spacing:0.23px;font-family:'Liberation Sans', sans-serif;transform:scaleY(1.04);transform-origin:0 27.5px;">Overview</div>
<div class="r" style="left:669px;top:476px;width:40px;height:40px;background:#dcdcde;border-radius:20px"></div>
<div class="t" style="left:689px;top:480.3px;font-size:25px;line-height:30px;font-weight:400;color:#535158;letter-spacing:0.00px;font-family:'Liberation Sans', sans-serif;transform:translateX(-50%) scaleY(1.04);transform-origin:0 23.7px;">0</div>
<div class="t" style="left:758px;top:476.5px;font-size:29px;line-height:35px;font-weight:400;color:#3a383f;letter-spacing:0.10px;font-family:'Liberation Sans', sans-serif;transform:scaleY(1.04);transform-origin:0 27.5px;">Commits</div>
<div class="r" style="left:882px;top:476px;width:40px;height:40px;background:#dcdcde;border-radius:20px"></div>
<div class="t" style="left:902px;top:480.3px;font-size:25px;line-height:30px;font-weight:400;color:#535158;letter-spacing:0.00px;font-family:'Liberation Sans', sans-serif;transform:translateX(-50%) scaleY(1.04);transform-origin:0 23.7px;">1</div>
<div class="t" style="left:970px;top:476.5px;font-size:29px;line-height:35px;font-weight:400;color:#3a383f;letter-spacing:0.25px;font-family:'Liberation Sans', sans-serif;transform:scaleY(1.04);transform-origin:0 27.5px;">Pipelines</div>
<div class="r" style="left:1098px;top:476px;width:40px;height:40px;background:#dcdcde;border-radius:20px"></div>
<div class="t" style="left:1118px;top:480.3px;font-size:25px;line-height:30px;font-weight:400;color:#535158;letter-spacing:0.00px;font-family:'Liberation Sans', sans-serif;transform:translateX(-50%) scaleY(1.04);transform-origin:0 23.7px;">1</div>
<div class="t" style="left:1186px;top:476.5px;font-size:29px;line-height:35px;font-weight:400;color:#3a383f;letter-spacing:0.27px;font-family:'Liberation Sans', sans-serif;transform:scaleY(1.04);transform-origin:0 27.5px;">Changes</div>
<div class="r" style="left:1311px;top:476px;width:40px;height:40px;background:#dcdcde;border-radius:20px"></div>
<div class="t" style="left:1331px;top:480.3px;font-size:25px;line-height:30px;font-weight:400;color:#535158;letter-spacing:0.00px;font-family:'Liberation Sans', sans-serif;transform:translateX(-50%) scaleY(1.04);transform-origin:0 23.7px;">1</div>
<div class="r" style="left:512px;top:544px;width:2315px;height:2px;background:#dcdcde"></div>
<div class="r" style="left:512px;top:540px;width:221px;height:5px;background:#1f75cb"></div>
<div class="r" style="left:2596px;top:464px;width:231px;height:63px;background:#fff;border:2px solid #bfbfc3;border-radius:20px;box-sizing:border-box"></div>
<div class="t" style="left:2622px;top:478.5px;font-size:29px;line-height:35px;font-weight:400;color:#3a383f;letter-spacing:0.39px;font-family:'Liberation Sans', sans-serif;transform:scaleY(1.04);transform-origin:0 27.5px;">Mark as done</div>
<svg class="r" style="left:512px;top:572px;" width="49" height="45" viewBox="0 0 72 64"><defs><linearGradient id="lg1" x1="0" y1="1" x2="1" y2="0"><stop offset="0" stop-color="#5d9f30"/><stop offset=".5" stop-color="#7cc544"/><stop offset="1" stop-color="#6ab53a"/></linearGradient>
<linearGradient id="lg2" x1="0" y1="0" x2="1" y2="0"><stop offset="0" stop-color="#5c9d2f"/><stop offset=".6" stop-color="#86cf4a"/><stop offset="1" stop-color="#64a835"/></linearGradient></defs>
<path d="M38.8 27.6C30 20 16 16 8 28 4 35 2 40 .5 43c6-3 15-1 22-7 6-5 10-8.5 16.3-8.4z" fill="url(#lg1)"/>
<path d="M40.2 26.2C39 14 46 3 60 1.5c5-.5 9-.5 11.2-.5-3 2-3 9-9.2 16-7 7-16 6-21.8 9.2z" fill="url(#lg1)"/>
<path d="M38.5 26c4.5 10 5.5 22 2 38" fill="none" stroke="url(#lg2)" stroke-width="5.5" stroke-linecap="round"/></svg>
<div class="t" style="left:572px;top:573.1px;font-size:40px;line-height:48px;font-weight:700;color:#1f1e24;letter-spacing:0.06px;font-family:'Liberation Sans', sans-serif;transform:scaleY(1.037);transform-origin:0 37.9px;">Carbon Optimization Summary</div>
<div class="t" style="left:512px;top:659.5px;font-size:29px;line-height:35px;font-weight:400;color:#3a383f;letter-spacing:0.17px;font-family:'Liberation Sans', sans-serif;transform:scaleY(1.04);transform-origin:0 27.5px;">This MR implements <b>5 critical optimizations</b> to reduce pipeline carbon emissions from <b>~2.4g to ~0.8-1.2g CO₂ per run</b> — a</div>
<div class="t" style="left:512px;top:702.0px;font-size:29px;line-height:35px;font-weight:400;color:#3a383f;letter-spacing:0.50px;font-family:'Liberation Sans', sans-serif;transform:scaleY(1.04);transform-origin:0 27.5px;"><b>50-67% reduction</b>.</div>
<svg class="r" style="left:515.7px;top:786.2px;" width="35.5" height="42.5" viewBox="0 0 35.5 42.5"><defs><pattern id="grd" width="3" height="3" patternUnits="userSpaceOnUse"><rect width="3" height="3" fill="#e3eaf3"/><path d="M0 0h3M0 0v3" stroke="#cfd9e6" stroke-width=".6"/></pattern></defs><rect width="35.5" height="42.5" fill="url(#grd)"/><rect x="1.6" y="14.9" width="8.5" height="27.4" fill="#52b43a"/><rect x="13.6" y="22.8" width="8.4" height="19.5" fill="#a8241b"/><rect x="26.1" y="5.7" width="8" height="36.6" fill="#2557bd"/></svg>
<div class="t" style="left:564px;top:789.0px;font-size:36px;line-height:43px;font-weight:700;color:#1f1e24;letter-spacing:-0.08px;font-family:'Liberation Sans', sans-serif;transform:scaleY(1.045);transform-origin:0 34.0px;">Carbon Impact</div>
<div class="r" style="left:512px;top:866px;width:892px;height:494px;border:2px solid #dcdcde;box-sizing:border-box"></div>
<div class="r" style="left:512px;top:948px;width:892px;height:2px;background:#dcdcde"></div>
<div class="r" style="left:512px;top:1030px;width:892px;height:2px;background:#dcdcde"></div>
<div class="r" style="left:512px;top:1112px;width:892px;height:2px;background:#dcdcde"></div>
<div class="r" style="left:512px;top:1194px;width:892px;height:2px;background:#dcdcde"></div>
<div class="r" style="left:512px;top:1276px;width:892px;height:2px;background:#dcdcde"></div>
<div class="r" style="left:760px;top:866px;width:2px;height:494px;background:#dcdcde"></div>
<div class="r" style="left:948px;top:866px;width:2px;height:494px;background:#dcdcde"></div>
<div class="r" style="left:1154px;top:866px;width:2px;height:494px;background:#dcdcde"></div>
<div class="t" style="left:546px;top:891.0px;font-size:29px;line-height:35px;font-weight:700;color:#1f1e24;letter-spacing:0.70px;font-family:'Liberation Sans', sans-serif;transform:scaleY(1.045);transform-origin:0 27.5px;">Metric</div>
<div class="t" style="left:794px;top:891.0px;font-size:29px;line-height:35px;font-weight:700;color:#1f1e24;letter-spacing:-0.24px;font-family:'Liberation Sans', sans-serif;transform:scaleY(1.045);transform-origin:0 27.5px;">Before</div>
<div class="t" style="left:982px;top:891.0px;font-size:29px;line-height:35px;font-weight:700;color:#1f1e24;letter-spacing:0.00px;font-family:'Liberation Sans', sans-serif;transform:scaleY(1.045);transform-origin:0 27.5px;">After</div>
<div class="t" style="left:1188px;top:891.0px;font-size:29px;line-height:35px;font-weight:700;color:#1f1e24;letter-spacing:-0.03px;font-family:'Liberation Sans', sans-serif;transform:scaleY(1.045);transform-origin:0 27.5px;">Improvement</div>
<div class="t" style="left:546px;top:973.0px;font-size:29px;line-height:35px;font-weight:700;color:#3a383f;letter-spacing:-0.32px;font-family:'Liberation Sans', sans-serif;transform:scaleY(1.045);transform-origin:0 27.5px;">Jobs per run</div>
<div class="t" style="left:794px;top:973.0px;font-size:29px;line-height:35px;font-weight:400;color:#3a383f;letter-spacing:0.00px;font-family:'Liberation Sans', sans-serif;transform:scaleY(1.04);transform-origin:0 27.5px;">3</div>
<div class="t" style="left:982px;top:973.0px;font-size:29px;line-height:35px;font-weight:400;color:#3a383f;letter-spacing:0.00px;font-family:'Liberation Sans', sans-serif;transform:scaleY(1.04);transform-origin:0 27.5px;">2</div>
<div class="t" style="left:1188px;top:973.0px;font-size:29px;line-height:35px;font-weight:700;color:#3a383f;letter-spacing:2.17px;font-family:'Liberation Sans', sans-serif;transform:scaleY(1.045);transform-origin:0 27.5px;">-33%</div>
<div class="t" style="left:546px;top:1055.0px;font-size:29px;line-height:35px;font-weight:700;color:#3a383f;letter-spacing:-0.20px;font-family:'Liberation Sans', sans-serif;transform:scaleY(1.045);transform-origin:0 27.5px;">Stages</div>
<div class="t" style="left:794px;top:1055.0px;font-size:29px;line-height:35px;font-weight:400;color:#3a383f;letter-spacing:0.00px;font-family:'Liberation Sans', sans-serif;transform:scaleY(1.04);transform-origin:0 27.5px;">4</div>
<div class="t" style="left:982px;top:1055.0px;font-size:29px;line-height:35px;font-weight:400;color:#3a383f;letter-spacing:0.00px;font-family:'Liberation Sans', sans-serif;transform:scaleY(1.04);transform-origin:0 27.5px;">2</div>
<div class="t" style="left:1188px;top:1055.0px;font-size:29px;line-height:35px;font-weight:700;color:#3a383f;letter-spacing:2.17px;font-family:'Liberation Sans', sans-serif;transform:scaleY(1.045);transform-origin:0 27.5px;">-50%</div>
<div class="t" style="left:546px;top:1137.0px;font-size:29px;line-height:35px;font-weight:700;color:#3a383f;letter-spacing:-0.53px;font-family:'Liberation Sans', sans-serif;transform:scaleY(1.045);transform-origin:0 27.5px;">CO₂ per run</div>
<div class="t" style="left:794px;top:1137.0px;font-size:29px;line-height:35px;font-weight:400;color:#3a383f;letter-spacing:1.07px;font-family:'Liberation Sans', sans-serif;transform:scaleY(1.04);transform-origin:0 27.5px;">~2.4g</div>
<div class="t" style="left:982px;top:1137.0px;font-size:29px;line-height:35px;font-weight:400;color:#3a383f;letter-spacing:0.45px;font-family:'Liberation Sans', sans-serif;transform:scaleY(1.04);transform-origin:0 27.5px;">~0.8-1.2g</div>
<div class="t" style="left:1188px;top:1137.0px;font-size:29px;line-height:35px;font-weight:700;color:#3a383f;letter-spacing:1.95px;font-family:'Liberation Sans', sans-serif;transform:scaleY(1.045);transform-origin:0 27.5px;">-50-67%</div>
<div class="t" style="left:546px;top:1219.0px;font-size:29px;line-height:35px;font-weight:700;color:#3a383f;letter-spacing:-0.51px;font-family:'Liberation Sans', sans-serif;transform:scaleY(1.045);transform-origin:0 27.5px;">Duration</div>
<div class="t" style="left:794px;top:1219.0px;font-size:29px;line-height:35px;font-weight:400;color:#3a383f;letter-spacing:1.10px;font-family:'Liberation Sans', sans-serif;transform:scaleY(1.04);transform-origin:0 27.5px;">~65s</div>
<div class="t" style="left:982px;top:1219.0px;font-size:29px;line-height:35px;font-weight:400;color:#3a383f;letter-spacing:1.57px;font-family:'Liberation Sans', sans-serif;transform:scaleY(1.04);transform-origin:0 27.5px;">~45-50s</div>
<div class="t" style="left:1188px;top:1219.0px;font-size:29px;line-height:35px;font-weight:700;color:#3a383f;letter-spacing:2.13px;font-family:'Liberation Sans', sans-serif;transform:scaleY(1.045);transform-origin:0 27.5px;">-25-30%</div>
<div class="t" style="left:546px;top:1301.0px;font-size:29px;line-height:35px;font-weight:700;color:#3a383f;letter-spacing:-0.28px;font-family:'Liberation Sans', sans-serif;transform:scaleY(1.045);transform-origin:0 27.5px;">Carbon Label</div>
<div class="t" style="left:1188px;top:1301.0px;font-size:29px;line-height:35px;font-weight:700;color:#3a383f;letter-spacing:-0.31px;font-family:'Liberation Sans', sans-serif;transform:scaleY(1.045);transform-origin:0 27.5px;">Improved</div>
<svg class="r" style="left:1318px;top:1136px;" width="36" height="33" viewBox="0 0 72 64"><defs><linearGradient id="lg1" x1="0" y1="1" x2="1" y2="0"><stop offset="0" stop-color="#5d9f30"/><stop offset=".5" stop-color="#7cc544"/><stop offset="1" stop-color="#6ab53a"/></linearGradient>
<linearGradient id="lg2" x1="0" y1="0" x2="1" y2="0"><stop offset="0" stop-color="#5c9d2f"/><stop offset=".6" stop-color="#86cf4a"/><stop offset="1" stop-color="#64a835"/></linearGradient></defs>
<path d="M38.8 27.6C30 20 16 16 8 28 4 35 2 40 .5 43c6-3 15-1 22-7 6-5 10-8.5 16.3-8.4z" fill="url(#lg1)"/>
<path d="M40.2 26.2C39 14 46 3 60 1.5c5-.5 9-.5 11.2-.5-3 2-3 9-9.2 16-7 7-16 6-21.8 9.2z" fill="url(#lg1)"/>
<path d="M38.5 26c4.5 10 5.5 22 2 38" fill="none" stroke="url(#lg2)" stroke-width="5.5" stroke-linecap="round"/></svg>
<svg class="r" style="left:794px;top:1298px;" width="34" height="34" viewBox="0 0 34 34"><defs><linearGradient id="gg" x1="0" y1="0" x2="0" y2="1"><stop offset="0" stop-color="#9cf685"/><stop offset=".15" stop-color="#86f06a"/><stop offset=".5" stop-color="#55b338"/><stop offset="1" stop-color="#3f8f2a"/></linearGradient></defs><circle cx="17" cy="17" r="16.4" fill="#3c9c29"/><circle cx="17" cy="17.3" r="15" fill="url(#gg)"/></svg>
<svg class="r" style="left:982px;top:1298px;" width="34" height="34" viewBox="0 0 34 34"><defs><linearGradient id="gg" x1="0" y1="0" x2="0" y2="1"><stop offset="0" stop-color="#9cf685"/><stop offset=".15" stop-color="#86f06a"/><stop offset=".5" stop-color="#55b338"/><stop offset="1" stop-color="#3f8f2a"/></linearGradient></defs><circle cx="17" cy="17" r="16.4" fill="#3c9c29"/><circle cx="17" cy="17.3" r="15" fill="url(#gg)"/></svg>
<div class="t" style="left:835px;top:1301.0px;font-size:29px;line-height:35px;font-weight:400;color:#3a383f;letter-spacing:0.10px;font-family:'Liberation Sans', sans-serif;transform:scaleY(1.04);transform-origin:0 27.5px;">Green</div>
<div class="t" style="left:1023px;top:1301.0px;font-size:29px;line-height:35px;font-weight:400;color:#3a383f;letter-spacing:0.12px;font-family:'Liberation Sans', sans-serif;transform:scaleY(1.04);transform-origin:0 27.5px;">Green+</div>
<div class="t" style="left:512px;top:1395.5px;font-size:29px;line-height:35px;font-weight:400;color:#3a383f;letter-spacing:-0.30px;font-family:'Liberation Sans', sans-serif;transform:scaleY(1.04);transform-origin:0 27.5px;"><b>Total Estimated Savings</b>: <b>~1.2-1.6g CO₂ per pipeline run</b></div>
<div class="r" style="left:512px;top:1466px;width:1670px;height:2px;background:#dcdcde"></div>
<svg class="r" style="left:505px;top:1510px;" width="65" height="65" viewBox="0 0 65 65"><g transform="rotate(-25 25 36)"><ellipse cx="25" cy="36" rx="17.2" ry="17.8" fill="#b92325"/><ellipse cx="25.8" cy="35" rx="13.6" ry="14.2" fill="#f4f4f4"/><ellipse cx="26.4" cy="34.4" rx="10.4" ry="10.8" fill="#c2282a"/><ellipse cx="26.8" cy="33.8" rx="7.2" ry="7.5" fill="#f4f4f4"/><ellipse cx="27.2" cy="33.4" rx="4" ry="4.2" fill="#c2282a"/></g><path d="M27.5 33.5l6-5" stroke="#e8c21c" stroke-width="2"/><path d="M32 29l3-4 3 3z" fill="#f2c418"/><path d="M34 26c3-4 8-7 12-9l3 5c-3 3-7 6-12 8z" fill="#6cc6d3"/><path d="M44 18c0-4 1-7 3-8 2 1 3 4 2 8zM47 21c3-1 7-1 9 1-1 2-4 3-8 2z" fill="#5fb3c2"/></svg>
<div class="t" style="left:572px;top:1519.1px;font-size:40px;line-height:48px;font-weight:700;color:#1f1e24;letter-spacing:0.12px;font-family:'Liberation Sans', sans-serif;transform:scaleY(1.045);transform-origin:0 37.9px;">Optimizations Applied</div>
<svg class="r" style="left:512px;top:1626px;" width="14" height="26" viewBox="0 0 14 26"><path d="M7.6 0.4h5.8V26H7.4V7.2L0.8 9.6V4.2z" fill="#1f1e24"/></svg>
<div class="t" style="left:528px;top:1618.0px;font-size:36px;line-height:43px;font-weight:700;color:#1f1e24;letter-spacing:0.00px;font-family:'Liberation Sans', sans-serif;transform:scaleY(1.045);transform-origin:0 34.0px;">.</div>
<svg class="r" style="left:545px;top:1617px;" width="43" height="38" viewBox="0 0 43 38"><defs><linearGradient id="wg" x1="0" y1="0" x2="0" y2="1"><stop offset="0" stop-color="#f7dc5a"/><stop offset="1" stop-color="#f3c63a"/></linearGradient></defs><path d="M21.5 0.8c.8 0 1.3.5 1.8 1.3L42.6 35c.6 1.1-.1 2.4-1.4 2.4H1.8C.5 37.4-.2 36.1.4 35L19.7 2.1c.5-.8 1-1.3 1.8-1.3z" fill="url(#wg)"/><path d="M19.6 9.5h3.9l-.5 15h-2.9z" fill="#000"/><circle cx="21.5" cy="30.7" r="2.6" fill="#000"/></svg>
<div class="t" style="left:597px;top:1618.0px;font-size:36px;line-height:43px;font-weight:700;color:#1f1e24;letter-spacing:-0.15px;font-family:'Liberation Sans', sans-serif;transform:scaleY(1.045);transform-origin:0 34.0px;">Eliminate Duplicate Work (Highest Priority)</div>
<div class="t" style="left:512px;top:1698.5px;font-size:29px;line-height:35px;font-weight:400;color:#3a383f;letter-spacing:0.09px;font-family:'Liberation Sans', sans-serif;transform:scaleY(1.04);transform-origin:0 27.5px;"><b>Evidence</b>: Lines 42-56 (</div>
<div class="r" style="left:831px;top:1696px;width:244px;height:42px;background:#ececef;border-radius:8px"></div>
<div class="t" style="left:842px;top:1703.3px;font-size:25px;line-height:30px;font-weight:400;color:#28272d;letter-spacing:0.00px;font-family:'Liberation Mono', monospace;-webkit-text-stroke:0.3px #28272d">build:dashboard</div>
<div class="t" style="left:1077px;top:1698.5px;font-size:29px;line-height:35px;font-weight:400;color:#3a383f;letter-spacing:0.00px;font-family:'Liberation Sans', sans-serif;transform:scaleY(1.04);transform-origin:0 27.5px;">) and 60-72 (</div>
<div class="r" style="left:1248px;top:1696px;width:92px;height:42px;background:#ececef;border-radius:8px"></div>
<div class="t" style="left:1258px;top:1703.3px;font-size:25px;line-height:30px;font-weight:400;color:#28272d;letter-spacing:-0.25px;font-family:'Liberation Mono', monospace;-webkit-text-stroke:0.3px #28272d">pages</div>
<div class="t" style="left:1342px;top:1698.5px;font-size:29px;line-height:35px;font-weight:400;color:#3a383f;letter-spacing:0.06px;font-family:'Liberation Sans', sans-serif;transform:scaleY(1.04);transform-origin:0 27.5px;">) performed <b>identical operations</b></div>
<div class="t" style="left:512px;top:1772.5px;font-size:29px;line-height:35px;font-weight:400;color:#3a383f;letter-spacing:-0.22px;font-family:'Liberation Sans', sans-serif;transform:scaleY(1.04);transform-origin:0 27.5px;"><b>Before:</b></div>
<div class="r" style="left:513px;top:1843px;width:1669px;height:37px;border:2px solid #dcdcde;border-bottom:none;border-radius:8px 8px 0 0;box-sizing:border-box;background:#fff"></div>
<div class="r" style="left:578px;top:1878px;width:6px;height:2px;background:#1f8a8a"></div>
<div class="t" style="left:2264px;top:576.5px;font-size:29px;line-height:35px;font-weight:700;color:#3a383f;letter-spacing:0.00px;font-family:'Liberation Sans', sans-serif;transform:scaleY(1.045);transform-origin:0 27.5px;">0 Assignees</div>
<div class="t" style="left:2737px;top:576.5px;font-size:29px;line-height:35px;font-weight:400;color:#3a383f;letter-spacing:-0.67px;font-family:'Liberation Sans', sans-serif;transform:scaleY(1.04);transform-origin:0 27.5px;">Edit</div>
<div class="t" style="left:2264px;top:621.5px;font-size:29px;line-height:35px;font-weight:400;color:#626168;letter-spacing:0.51px;font-family:'Liberation Sans', sans-serif;transform:scaleY(1.04);transform-origin:0 27.5px;">None - assign yourself</div>
<div class="r" style="left:2264px;top:692px;width:540px;height:2px;background:#e9e9ec"></div>
<div class="t" style="left:2264px;top:724.0px;font-size:29px;line-height:35px;font-weight:700;color:#3a383f;letter-spacing:-0.16px;font-family:'Liberation Sans', sans-serif;transform:scaleY(1.045);transform-origin:0 27.5px;">0 Reviewers</div>
<div class="t" style="left:2737px;top:724.0px;font-size:29px;line-height:35px;font-weight:400;color:#3a383f;letter-spacing:-0.67px;font-family:'Liberation Sans', sans-serif;transform:scaleY(1.04);transform-origin:0 27.5px;">Edit</div>
<div class="t" style="left:2264px;top:773.9px;font-size:25px;line-height:30px;font-weight:400;color:#626168;letter-spacing:0.41px;font-family:'Liberation Sans', sans-serif;transform:scaleY(1.04);transform-origin:0 23.7px;">Approval is optional</div>
<div class="t" style="left:2516px;top:773.9px;font-size:25px;line-height:30px;font-weight:400;color:#1f75cb;letter-spacing:0.18px;font-family:'Liberation Sans', sans-serif;transform:scaleY(1.04);transform-origin:0 23.7px;">Assign</div>
<div class="t" style="left:2264px;top:828.1px;font-size:29px;line-height:35px;font-weight:400;color:#626168;letter-spacing:0.51px;font-family:'Liberation Sans', sans-serif;transform:scaleY(1.04);transform-origin:0 27.5px;">None - assign yourself</div>
<div class="r" style="left:2264px;top:894px;width:540px;height:2px;background:#e9e9ec"></div>
<div class="t" style="left:2264px;top:926.3px;font-size:29px;line-height:35px;font-weight:700;color:#3a383f;letter-spacing:-0.34px;font-family:'Liberation Sans', sans-serif;transform:scaleY(1.045);transform-origin:0 27.5px;">Labels</div>
<div class="t" style="left:2737px;top:926.3px;font-size:29px;line-height:35px;font-weight:400;color:#3a383f;letter-spacing:-0.67px;font-family:'Liberation Sans', sans-serif;transform:scaleY(1.04);transform-origin:0 27.5px;">Edit</div>
<div class="r" style="left:2264px;top:976px;width:251px;height:40px;background:#6f98c9;border-radius:20px"></div>
<div class="t" style="left:2275px;top:979.5px;font-size:26px;line-height:31px;font-weight:400;color:#fff;letter-spacing:0.31px;font-family:'Liberation Sans', sans-serif;transform:scaleY(1.04);transform-origin:0 24.5px;">carbon-reduction</div>
<svg class="r" style="left:2487px;top:989px;" width="16" height="16" viewBox="0 0 16 16"><path d="M2.5 2.5l11 11M13.5 2.5l-11 11" stroke="#fff" stroke-width="2.6" stroke-linecap="round"/></svg>
<div class="r" style="left:2523px;top:976px;width:111px;height:40px;background:#6f98c9;border-radius:20px"></div>
<div class="t" style="left:2534px;top:979.5px;font-size:26px;line-height:31px;font-weight:400;color:#fff;letter-spacing:1.10px;font-family:'Liberation Sans', sans-serif;transform:scaleY(1.04);transform-origin:0 24.5px;">ci-cd</div>
<svg class="r" style="left:2606px;top:989px;" width="16" height="16" viewBox="0 0 16 16"><path d="M2.5 2.5l11 11M13.5 2.5l-11 11" stroke="#fff" stroke-width="2.6" stroke-linecap="round"/></svg>
<div class="r" style="left:2264px;top:1024px;width:228px;height:40px;background:#6f98c9;border-radius:20px"></div>
<div class="t" style="left:2275px;top:1027.5px;font-size:26px;line-height:31px;font-weight:400;color:#fff;letter-spacing:0.23px;font-family:'Liberation Sans', sans-serif;transform:scaleY(1.04);transform-origin:0 24.5px;">green-software</div>
<svg class="r" style="left:2464px;top:1037px;" width="16" height="16" viewBox="0 0 16 16"><path d="M2.5 2.5l11 11M13.5 2.5l-11 11" stroke="#fff" stroke-width="2.6" stroke-linecap="round"/></svg>
<div class="r" style="left:2500px;top:1024px;width:190px;height:40px;background:#6f98c9;border-radius:20px"></div>
<div class="t" style="left:2511px;top:1027.5px;font-size:26px;line-height:31px;font-weight:400;color:#fff;letter-spacing:0.14px;font-family:'Liberation Sans', sans-serif;transform:scaleY(1.04);transform-origin:0 24.5px;">optimization</div>
<svg class="r" style="left:2662px;top:1037px;" width="16" height="16" viewBox="0 0 16 16"><path d="M2.5 2.5l11 11M13.5 2.5l-11 11" stroke="#fff" stroke-width="2.6" stroke-linecap="round"/></svg>
<div class="r" style="left:2264px;top:1094px;width:540px;height:2px;background:#e9e9ec"></div>
<div class="t" style="left:2264px;top:1126.1px;font-size:29px;line-height:35px;font-weight:700;color:#3a383f;letter-spacing:0.00px;font-family:'Liberation Sans', sans-serif;transform:scaleY(1.045);transform-origin:0 27.5px;">Milestone</div>
<div class="t" style="left:2737px;top:1126.1px;font-size:29px;line-height:35px;font-weight:400;color:#3a383f;letter-spacing:-0.67px;font-family:'Liberation Sans', sans-serif;transform:scaleY(1.04);transform-origin:0 27.5px;">Edit</div>
<div class="t" style="left:2264px;top:1171.2px;font-size:29px;line-height:35px;font-weight:400;color:#626168;letter-spacing:0.60px;font-family:'Liberation Sans', sans-serif;transform:scaleY(1.04);transform-origin:0 27.5px;">None</div>
<div class="r" style="left:2264px;top:1242px;width:540px;height:2px;background:#e9e9ec"></div>
<div class="t" style="left:2264px;top:1282.5px;font-size:29px;line-height:35px;font-weight:700;color:#3a383f;letter-spacing:-0.03px;font-family:'Liberation Sans', sans-serif;transform:scaleY(1.045);transform-origin:0 27.5px;">Time tracking</div>
<svg class="r" style="left:2717px;top:1283px;" width="30" height="34" viewBox="0 0 30 34"><circle cx="14" cy="19" r="12" fill="none" stroke="#28272d" stroke-width="2.8"/><path d="M10 2.5h8M14 3v4M14 12v7l4 4" fill="none" stroke="#28272d" stroke-width="2.8" stroke-linecap="round"/><path d="M23.5 8l2.5-2.5" stroke="#28272d" stroke-width="2.6" stroke-linecap="round"/></svg>
<svg class="r" style="left:2767px;top:1287px;" width="26" height="26" viewBox="0 0 26 26"><path d="M13 1v24M1 13h24" stroke="#28272d" stroke-width="2.6" stroke-linecap="round"/></svg>
<div class="t" style="left:2264px;top:1327.2px;font-size:29px;line-height:35px;font-weight:400;color:#626168;letter-spacing:0.35px;font-family:'Liberation Sans', sans-serif;transform:scaleY(1.04);transform-origin:0 27.5px;">No estimate or time spent</div>
<div class="r" style="left:2264px;top:1398px;width:540px;height:2px;background:#e9e9ec"></div>
<div class="t" style="left:2264px;top:1438.1px;font-size:29px;line-height:35px;font-weight:700;color:#3a383f;letter-spacing:-0.65px;font-family:'Liberation Sans', sans-serif;transform:scaleY(1.045);transform-origin:0 27.5px;">1 Participant</div>
<svg class="r" style="left:2264px;top:1488px;filter:blur(0.7px)" width="48" height="48" viewBox="0 0 64 64"><defs><clipPath id="cpa2"><circle cx="32" cy="32" r="32"/></clipPath></defs>
<g clip-path="url(#cpa2)"><rect width="64" height="64" fill="#dcdcb0"/>
<path d="M0 0h64v22H0z" fill="#edf0ec"/>
<path d="M0 18c8-3 17-1 24 3v22H0z" fill="#d6d685"/>
<path d="M44 12c10 1 18 9 20 17v24H47z" fill="#dcd88a"/>
<path d="M8 11l9 5M13 4l6 9M21 2l3 9M45 4l-2 8M53 8l-6 6M59 14l-7 5" stroke="#6f7f78" stroke-width="1.6"/>
<rect x="0" y="40" width="9" height="15" fill="#a99f84"/>
<path d="M24.5 14c0-8 4-11.5 9-11.5s9.5 3.5 9.5 11.5v20h-18.5z" fill="#3e2d27"/>
<ellipse cx="33.6" cy="17" rx="6.2" ry="8" fill="#d9b29e"/>
<path d="M8 64c0-13 1-27 8-32 5-3 10-3 13-3h9c9 0 18 3 22 12 1 6 1 14-1 23z" fill="#eff2f2"/>
<path d="M38.5 24c3 10 6 20 9 31h-7.5c-2-10-3.5-20-4.5-31z" fill="#3e2d27"/></g></svg>
<div class="r" style="left:2877px;top:186px;width:46px;height:47px;background:#fff;border:2px solid #bfbfc3;border-radius:14px;box-sizing:border-box"></div>
<svg class="r" style="left:2884px;top:193px;" width="32" height="32" viewBox="0 0 32 32"><path d="M17 3.5H6a3 3 0 0 0-3 3v20a3 3 0 0 0 3 3h20a3 3 0 0 0 3-3V15" fill="none" stroke="#28272d" stroke-width="2.9" stroke-linecap="round"/><path d="M13 19L29.5 2.8" stroke="#28272d" stroke-width="3.2" stroke-linecap="round"/></svg>
<div class="r" style="left:2884px;top:257.5px;width:32px;height:2.0px;background:#c9c7cf"></div>
<svg class="r" style="left:2884px;top:294px;" width="32" height="32" viewBox="0 0 32 32"><path d="M15 2.8H27a3.2 3.2 0 0 1 3.2 3.2V19.5a3.2 3.2 0 0 1-3.2 3.2H8L1.6 29.5V13" fill="none" stroke="#28272d" stroke-width="2.9" stroke-linejoin="round" stroke-linecap="round"/><path d="M6 1l1.7 4.3L12 7 7.7 8.7 6 13 4.3 8.7 0 7l4.3-1.7z" fill="#28272d"/><path d="M16 8l1.4 3.6L21 13l-3.6 1.4L16 18l-1.4-3.6L11 13l3.6-1.4z" fill="#28272d"/></svg>
<svg class="r" style="left:2884px;top:366px;" width="32" height="32" viewBox="0 0 32 32"><path d="M4.5 9.5A14 14 0 1 1 2.2 17" fill="none" stroke="#28272d" stroke-width="2.9" stroke-linecap="round"/><path d="M1.5 3.5v7h7" fill="none" stroke="#28272d" stroke-width="2.9" stroke-linecap="round" stroke-linejoin="round"/><path d="M16 6.5V15l4.8 4.8" fill="none" stroke="#28272d" stroke-width="2.9" stroke-linecap="round" stroke-linejoin="round"/></svg>
<svg class="r" style="left:2884px;top:437px;" width="32" height="32" viewBox="0 0 32 32"><path d="M15 5.5V1.6H5A3.2 3.2 0 0 0 1.8 4.8V15H5M17 26.5v3.9h10a3.2 3.2 0 0 0 3.2-3.2V17H27" fill="none" stroke="#28272d" stroke-width="2.9" stroke-linecap="round" stroke-linejoin="round"/><path d="M16 9.5l1.8 4.7 4.7 1.8-4.7 1.8L16 22.5l-1.8-4.7L9.5 16l4.7-1.8z" fill="#28272d"/></svg>
<svg class="r" style="left:2884px;top:1848px;" width="34" height="34" viewBox="0 0 32 34"><path d="M13 9l-2.5 6.5C9 19 10.5 21 13 23l7 5.5 7-5.5c2.5-2 4-4 2.5-7.5L27 9l-3 4.5h-8z" fill="none" stroke="#2c2b31" stroke-width="2.6" stroke-linejoin="round"/><path d="M4.5 1.5v5M2 4h5" stroke="#2c2b31" stroke-width="2"/><path d="M6.5 23l1.8 3.7 3.7 1.8-3.7 1.8L6.5 34 4.7 30.3 1 28.5l3.7-1.8z" fill="#2c2b31"/></svg>
<div class="r" style="left:2933px;top:1001px;width:17px;height:122px;background:#1e1e1e;border-radius:9px"></div>
</body></html>
